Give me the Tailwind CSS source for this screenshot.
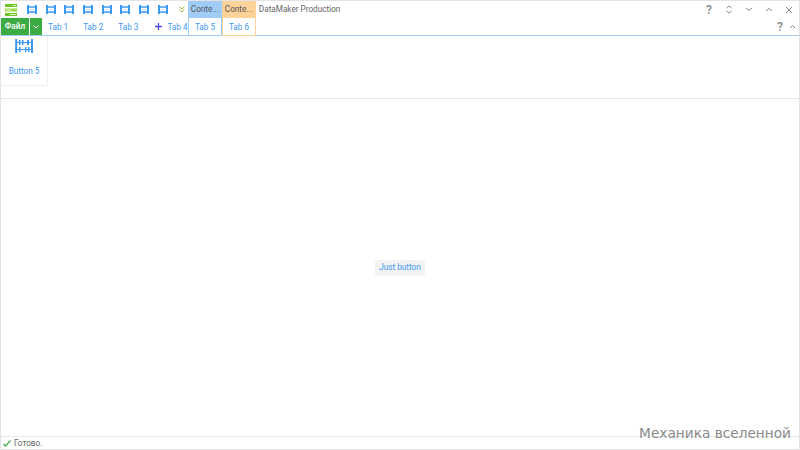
<!DOCTYPE html>
<html lang="en">
<head>
    <meta charset="UTF-8">
    <title>DataMaker Production</title>
    <script src="https://cdn.jsdelivr.net/npm/@tailwindcss/browser@4"></script>
</head>
<body class="w-[800px] h-[450px] overflow-hidden bg-white font-['Roboto',sans-serif] text-[8.200px] text-[#666] whitespace-nowrap">
    <svg class="hidden">
        <symbol id="abacus" viewBox="0 0 18 14">
            <path d="M1.200 0v14M17 0v14" fill="none" stroke="currentColor" stroke-width="2"/>
            <path d="M1 3.500h16M1 10.500h16" fill="none" stroke="currentColor" stroke-width="1.200"/>
            <path d="M4 1h1.500v5H4zM7 1h1.500v5H7zM12 1h2v5h-2zM4 8h1.500v5H4zM10 8h1.500v5H10zM13 8h1.500v5H13z" fill="currentColor"/>
        </symbol>
        <symbol id="abacus-small" viewBox="0 0 10 9">
            <path d="M0 0h2v9H0zM8 0h2v9H8z" fill="currentColor"/>
            <path d="M2 1h6v2H2zM2 6h6v2H2z" fill="currentColor" opacity=".75"/>
            <path d="M2 4h6v1H2z" fill="currentColor" opacity=".2"/>
        </symbol>
    </svg>

    <div class="relative flex flex-col w-full h-full border border-[#e3e3e3]">
        <!-- Title row -->
        <div class="flex items-stretch h-[17px] shrink-0">
            <div class="flex items-center justify-center w-[19px]">
                <svg width="12" height="12" viewBox="0 0 12 12">
                    <path d="M0 0h12v3H0z" fill="#6cc724"/>
                    <path d="M0 4.500h12v3H0z" fill="#9bdc45"/>
                    <path d="M0 9h12v3H0z" fill="#6cc724"/>
                    <path d="M8 1h3v1H8zM1 5.500h5v1H1zM5 10h6v1H5z" fill="#e6f7c8"/>
                </svg>
            </div>
            <div class="flex items-center pl-[7px] gap-[8.700px] text-[#3d98f2]">
                <svg class="w-[10px] h-[9px]"><use href="#abacus-small"/></svg>
                <svg class="w-[10px] h-[9px]"><use href="#abacus-small"/></svg>
                <svg class="w-[10px] h-[9px]"><use href="#abacus-small"/></svg>
                <svg class="w-[10px] h-[9px]"><use href="#abacus-small"/></svg>
                <svg class="w-[10px] h-[9px]"><use href="#abacus-small"/></svg>
                <svg class="w-[10px] h-[9px]"><use href="#abacus-small"/></svg>
                <svg class="w-[10px] h-[9px]"><use href="#abacus-small"/></svg>
                <svg class="w-[10px] h-[9px]"><use href="#abacus-small"/></svg>
            </div>
            <div class="flex items-center w-[20px] pl-[11px]">
                <svg width="6" height="7" viewBox="0 0 6 7" fill="none" stroke="#9ab83a" stroke-width="1">
                    <path d="M.5 .5l2.500 2.500 2.500-2.500M.5 3.500l2.500 2.500 2.500-2.500"/>
                </svg>
            </div>
            <div class="flex items-center w-[34px] pl-[3px] bg-[#9fcdf8] text-[#555]">Conte...</div>
            <div class="flex items-center w-[34px] pl-[3px] bg-[#fdd39a] text-[#555]">Conte...</div>
            <div class="flex items-center pl-[3px] grow text-[#666]">DataMaker Production</div>
            <div class="flex items-center text-[#888]">
                <span class="flex justify-center w-[20px] text-[12px] font-medium">?</span>
                <span class="flex justify-center w-[20px]">
                    <svg width="8" height="9" viewBox="0 0 8 9" fill="none" stroke="#888"><path d="M1.500 3l2.500-2 2.500 2M1.500 6l2.500 2 2.500-2"/></svg>
                </span>
                <span class="flex justify-center w-[20px]">
                    <svg width="8" height="5" viewBox="0 0 8 5" fill="none" stroke="#888"><path d="M1 1l3 2.500L7 1"/></svg>
                </span>
                <span class="flex justify-center w-[20px]">
                    <svg width="8" height="5" viewBox="0 0 8 5" fill="none" stroke="#888"><path d="M1 4l3-2.500L7 4"/></svg>
                </span>
                <span class="flex justify-center w-[20px]">
                    <svg width="8" height="8" viewBox="0 0 8 8" fill="none" stroke="#888"><path d="M1 1l6 6M7 1L1 7"/></svg>
                </span>
            </div>
        </div>

        <!-- Tab row -->
        <div class="flex items-stretch h-[18px] shrink-0 border-b border-[#9fcdf8]">
            <div class="flex items-center justify-center w-[28px] h-[17px] bg-[#3cab44] text-white font-medium">Файл</div>
            <div class="flex items-center justify-center w-[12px] h-[17px] ml-[1px] bg-[#3cab44]">
                <svg width="6" height="4" viewBox="0 0 6 4" fill="none" stroke="#fff"><path d="M.5 .5L3 3 5.500 .5"/></svg>
            </div>
            <div class="flex items-center gap-[15px] w-[146px] pl-[6px] pt-[1px] shrink-0 text-[#3d98f2]">
                <span>Tab 1</span>
                <span>Tab 2</span>
                <span>Tab 3</span>
                <span class="flex items-center gap-[5px] ml-[2px]">
                    <svg width="7" height="7" viewBox="0 0 7 7" fill="none" stroke="#4a4ae0" stroke-width="1.300"><path d="M3.500 0v7M0 3.500h7"/></svg>
                    Tab 4
                </span>
            </div>
            <div class="flex items-center justify-center w-[34px] h-[18px] pt-[1px] bg-white text-[#3d98f2] border-x border-b border-[#9fcdf8]">Tab 5</div>
            <div class="flex items-center justify-center w-[34px] h-[18px] pt-[1px] bg-white text-[#3d98f2] border-x border-b border-[#fdd39a]">Tab 6</div>
            <div class="grow"></div>
            <div class="flex items-center text-[#888]">
                <span class="w-[12px] text-center text-[12px] font-medium">?</span>
                <svg class="mx-[3px]" width="7" height="5" viewBox="0 0 7 5" fill="none" stroke="#888"><path d="M1 4l2.500-2.500L6 4"/></svg>
            </div>
        </div>

        <!-- Ribbon -->
        <div class="flex h-[63px] shrink-0 border-b border-[#e6e6e6]">
            <div class="flex flex-col items-center w-[47px] h-[50px] border-r border-b border-[#efefef] text-[#3d98f2]">
                <svg class="w-[18px] h-[14px] mt-[3px]"><use href="#abacus"/></svg>
                <span class="mt-[12px]">Button 5</span>
            </div>
        </div>

        <!-- Content -->
        <div class="flex items-center justify-center grow">
            <button class="w-[50px] h-[16px] rounded-[2px] bg-[#f3f3f3] text-[#3d98f2]">Just button</button>
        </div>

        <!-- Status bar -->
        <div class="flex items-center gap-[3px] h-[13px] shrink-0 pl-[2px] border-t border-[#e6e6e6] text-[#666]">
            <svg width="8" height="7" viewBox="0 0 8 7" fill="none" stroke="#4caf50" stroke-width="1.300"><path d="M.5 4l2 2L7.500 .5"/></svg>
            Готово.
        </div>

        <span class="absolute right-[8px] bottom-[8px] font-['DejaVu_Sans',sans-serif] text-[13.700px] leading-[16px] text-[#8a8a8a]">Механика вселенной</span>
    </div>
</body>
</html>
